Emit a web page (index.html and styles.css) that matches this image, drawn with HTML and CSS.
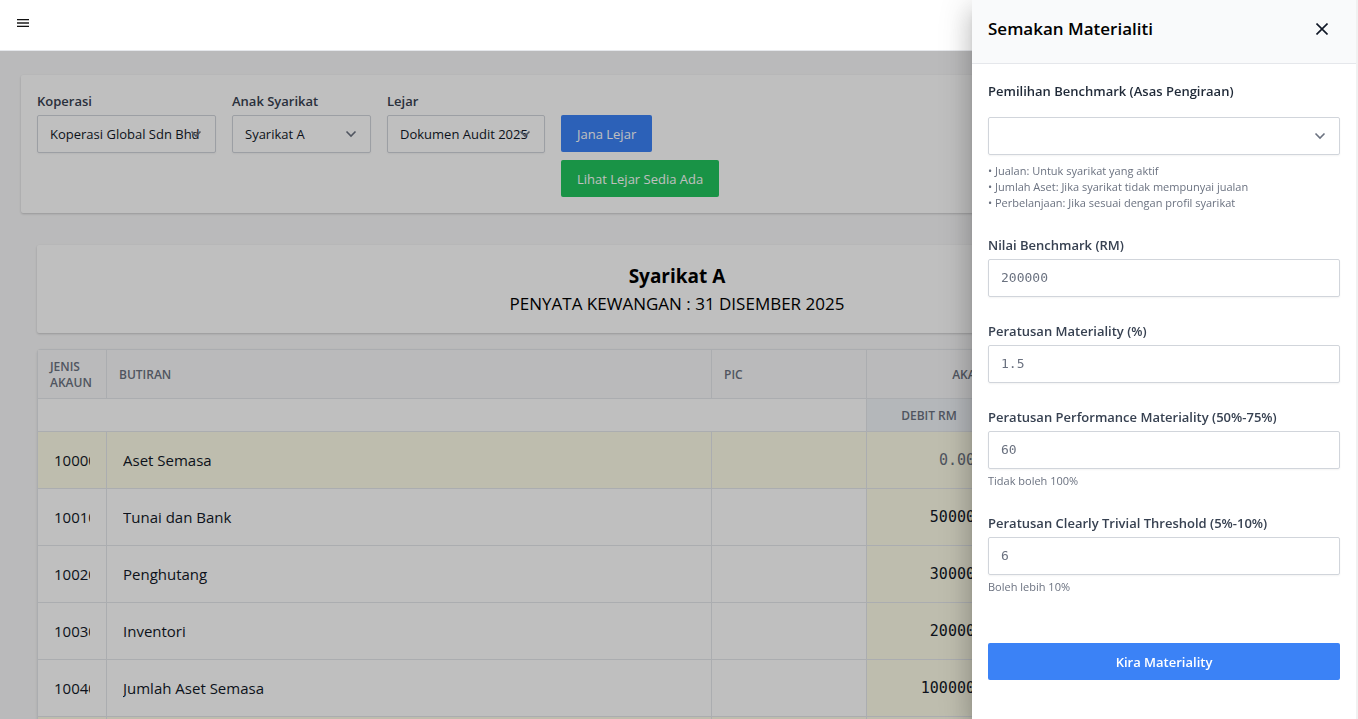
FILE: index.html
```html
<!DOCTYPE html>
<html lang="ms">
<head>
<meta charset="utf-8">
<title>Semakan Materialiti</title>
<link rel="stylesheet" href="styles.css">
</head>
<body>
<header class="topbar">
  <button class="icon-button" type="button" aria-label="Menu">
    <svg width="12" height="8" viewBox="0 0 12 8" shape-rendering="crispEdges"><path d="M0 0h12v1H0zM0 7h12v1H0z" fill="#111"/><path d="M0 1h12v1H0zM0 6h12v1H0z" fill="#bbb"/><path d="M0 3h12v2H0z" fill="#555"/></svg>
  </button>
</header>

<main class="page">
  <section class="card filters">
    <div class="field">
      <label for="koperasi">Koperasi</label>
      <div class="select select-lg"><select id="koperasi"><option>Koperasi Global Sdn Bhd</option></select>
        <svg class="chevron" viewBox="0 0 12 8"><path d="M1.5 1.5 6 6l4.500-4.500"/></svg></div>
    </div>
    <div class="field">
      <label for="anak">Anak Syarikat</label>
      <div class="select select-sm"><select id="anak"><option>Syarikat A</option></select>
        <svg class="chevron" viewBox="0 0 12 8"><path d="M1.5 1.5 6 6l4.500-4.500"/></svg></div>
    </div>
    <div class="field">
      <label for="lejar">Lejar</label>
      <div class="select select-md"><select id="lejar"><option>Dokumen Audit 2025</option></select>
        <svg class="chevron" viewBox="0 0 12 8"><path d="M1.5 1.5 6 6l4.500-4.500"/></svg></div>
    </div>
    <div class="actions">
      <button class="button button-blue" type="button">Jana Lejar</button>
      <button class="button button-green" type="button">Lihat Lejar Sedia Ada</button>
    </div>
  </section>

  <section class="statement">
    <div class="card statement-title">
      <h1>Syarikat A</h1>
      <p>PENYATA KEWANGAN : 31 DISEMBER 2025</p>
    </div>
    <table class="ledger">
      <colgroup><col class="col-code"><col><col class="col-pic"><col class="col-amount"><col class="col-amount"><col class="col-rest"></colgroup>
      <thead>
        <tr class="head-main"><th>Jenis Akaun</th><th>Butiran</th><th>PIC</th><th class="center" colspan="2">Akaun Awal</th><th></th></tr>
        <tr class="head-sub"><td colspan="3"></td><th class="center">Debit RM</th><th></th><th></th></tr>
      </thead>
      <tbody>
        <tr class="group"><td><input aria-label="Jenis akaun" value="10000"></td><td><input aria-label="Butiran" value="Aset Semasa"></td><td></td><td class="amount"><input aria-label="Debit" placeholder="0.00"></td><td class="amount"></td><td></td></tr>
        <tr><td><input aria-label="Jenis akaun" value="10010"></td><td><input aria-label="Butiran" value="Tunai dan Bank"></td><td></td><td class="amount"><input aria-label="Debit" value="50000"></td><td class="amount"></td><td></td></tr>
        <tr><td><input aria-label="Jenis akaun" value="10020"></td><td><input aria-label="Butiran" value="Penghutang"></td><td></td><td class="amount"><input aria-label="Debit" value="30000"></td><td class="amount"></td><td></td></tr>
        <tr><td><input aria-label="Jenis akaun" value="10030"></td><td><input aria-label="Butiran" value="Inventori"></td><td></td><td class="amount"><input aria-label="Debit" value="20000"></td><td class="amount"></td><td></td></tr>
        <tr><td><input aria-label="Jenis akaun" value="10040"></td><td><input aria-label="Butiran" value="Jumlah Aset Semasa"></td><td></td><td class="amount"><input aria-label="Debit" value="100000"></td><td class="amount"></td><td></td></tr>
        <tr class="group"><td></td><td></td><td></td><td></td><td></td><td></td></tr>
      </tbody>
    </table>
  </section>
</main>

<div class="mask"></div>

<aside class="drawer">
  <div class="drawer-head">
    <h2>Semakan Materialiti</h2>
    <button class="icon-button" type="button" aria-label="Tutup">
      <svg width="12" height="12" viewBox="0 0 12 12"><path d="M.5.5l11 11M11.500.5l-11 11" fill="none" stroke="#111827" stroke-width="1.600"/></svg>
    </button>
  </div>
  <form class="drawer-body">
    <div>
      <label class="strong" for="benchmark">Pemilihan Benchmark (Asas Pengiraan)</label>
      <div class="select"><select id="benchmark"><option></option></select>
        <svg class="chevron" viewBox="0 0 12 8"><path d="M1.5 1.5 6 6l4.500-4.500"/></svg></div>
      <div class="hints">
        <p>• Jualan: Untuk syarikat yang aktif</p>
        <p>• Jumlah Aset: Jika syarikat tidak mempunyai jualan</p>
        <p>• Perbelanjaan: Jika sesuai dengan profil syarikat</p>
      </div>
    </div>
    <div class="field">
      <label for="nilai">Nilai Benchmark (RM)</label>
      <input class="number" id="nilai" placeholder="200000">
    </div>
    <div class="field">
      <label for="materiality">Peratusan Materiality (%)</label>
      <input class="number" id="materiality" placeholder="1.5">
    </div>
    <div class="field">
      <label for="performance">Peratusan Performance Materiality (50%-75%)</label>
      <input class="number" id="performance" placeholder="60">
      <p class="help">Tidak boleh 100%</p>
    </div>
    <div class="field">
      <label for="threshold">Peratusan Clearly Trivial Threshold (5%-10%)</label>
      <input class="number" id="threshold" placeholder="6">
      <p class="help">Boleh lebih 10%</p>
    </div>
    <button class="button button-blue submit" type="button">Kira Materiality</button>
  </form>
</aside>
</body>
</html>
```
FILE: styles.css
```css
* { box-sizing: border-box; }

html { background: #f1f1f1; }

body {
  margin: 0;
  height: 100vh;
  display: flex;
  flex-direction: column;
  overflow: hidden;
  font-family: "Open Sans", "Noto Sans", sans-serif;
  font-size: 13px;
  line-height: 20px;
  color: #111827;
}

h1, h2, p { margin: 0; }

input, select, button { font: inherit; color: inherit; }

.topbar {
  position: relative;
  z-index: 2;
  flex: none;
  height: 51px;
  padding: 19px 17px;
  background: #fff;
  border-bottom: 1px solid #e5e7eb;
}

.icon-button {
  display: block;
  padding: 0;
  border: 0;
  background: none;
}

.icon-button svg { display: block; }

.page {
  flex: 1;
  min-height: 0;
  overflow: hidden;
  padding: 24px 25px 0 21px;
  background: #f9f9fa;
}

.card {
  background: #fff;
  border-radius: 2px;
  box-shadow: 0 1px 3px rgba(0, 0, 0, 0.1), 0 1px 2px rgba(0, 0, 0, 0.1);
}

.filters {
  display: flex;
  gap: 16px;
  padding: 16px;
}

.field {
  display: flex;
  flex-direction: column;
  gap: 4px;
}

label {
  font-weight: 600;
  color: #374151;
}

.select { position: relative; }
.select-lg { width: 179px; }
.select-sm { width: 139px; }
.select-md { width: 158px; }

select, .number {
  display: block;
  width: 100%;
  height: 38px;
  margin: 0;
  padding: 0 12px;
  appearance: none;
  background: #fff;
  border: 1px solid #d1d5db;
  border-radius: 2px;
  box-shadow: 0 1px 2px rgba(0, 0, 0, 0.05);
}

.chevron {
  position: absolute;
  top: 15px;
  right: 14px;
  width: 12px;
  height: 8px;
  fill: none;
  stroke: #6b7280;
  stroke-width: 1.600;
  pointer-events: none;
}

.actions {
  display: flex;
  flex-direction: column;
  align-items: flex-start;
  gap: 8px;
  padding-top: 24px;
}

.button {
  height: 37px;
  padding: 0 16px;
  border: 0;
  border-radius: 2px;
  color: #fff;
}

.button-blue { background: #3b82f6; }
.button-green { background: #22c55e; }

.statement { padding: 32px 16px 0; }

.statement-title {
  padding: 17px 16px 15px;
  margin-bottom: 16px;
  text-align: center;
  font-size: 17px;
  line-height: 28px;
  color: #000;
}

.statement-title h1 { font-size: 19px; font-weight: 700; }

.ledger {
  width: 100%;
  table-layout: fixed;
  border-collapse: separate;
  border-spacing: 0;
  background: #fff;
  border: solid #e5e7eb;
  border-width: 1px 0 0 1px;
  border-radius: 4px 4px 0 0;
  box-shadow: 0 1px 3px rgba(0, 0, 0, 0.1);
}

.col-code { width: 69px; }
.col-pic { width: 155px; }
.col-amount { width: 125px; }
.col-rest { width: 200px; }

.ledger th, .ledger td {
  padding: 0 12px;
  border: solid #e5e7eb;
  border-width: 0 1px 1px 0;
}

.ledger th {
  padding-top: 2px;
  text-align: left;
  font-size: 12px;
  line-height: 16px;
  font-weight: 600;
  text-transform: uppercase;
  color: #6b7280;
  background: #f9f9fa;
}

.ledger th.center { text-align: center; }
.head-main th { height: 49px; }
.head-sub th, .head-sub td { height: 33px; }
.ledger .head-sub th { background: #f1f5f9; }

.ledger tbody td { height: 57px; padding: 0 16px; }

.ledger input {
  display: block;
  width: 100%;
  padding: 0;
  border: 0;
  background: none;
  font-size: 15px;
}

.ledger .amount input {
  text-align: right;
  font-family: "DejaVu Sans Mono", monospace;
}

.ledger .amount, .ledger .group td { background: #fefce8; }

::placeholder { color: #6b7280; opacity: 1; }

.mask {
  position: fixed;
  inset: 0;
  z-index: 1;
  background: rgba(0, 0, 0, 0.25);
}

.drawer {
  position: fixed;
  z-index: 3;
  top: 0;
  right: 2px;
  bottom: 0;
  width: 384px;
  background: #fff;
  box-shadow: 2px 0 0 #f1f1f1, 0 8px 10px -5px rgba(0, 0, 0, 0.2), 0 16px 24px 2px rgba(0, 0, 0, 0.14), 0 6px 30px 5px rgba(0, 0, 0, 0.12);
}

.drawer-head {
  display: flex;
  align-items: center;
  justify-content: space-between;
  height: 64px;
  padding: 0 28px 6px 16px;
  background: #f9fafb;
  border-bottom: 1px solid #e5e7eb;
}

.drawer-head h2 {
  font-size: 17px;
  font-weight: 600;
  line-height: 28px;
  color: #000;
}

.drawer-body {
  display: flex;
  flex-direction: column;
  gap: 24px;
  padding: 17px 16px;
}

.strong {
  display: block;
  margin-bottom: 16px;
  color: #1f2937;
}

.hints { margin-top: 8px; }

.hints, .help {
  font-size: 11px;
  line-height: 16px;
  color: #6b7280;
}

.number {
  padding-bottom: 2px;
  font-family: "DejaVu Sans Mono", monospace;
}

.submit {
  margin-top: 24px;
  font-weight: 600;
}
```
